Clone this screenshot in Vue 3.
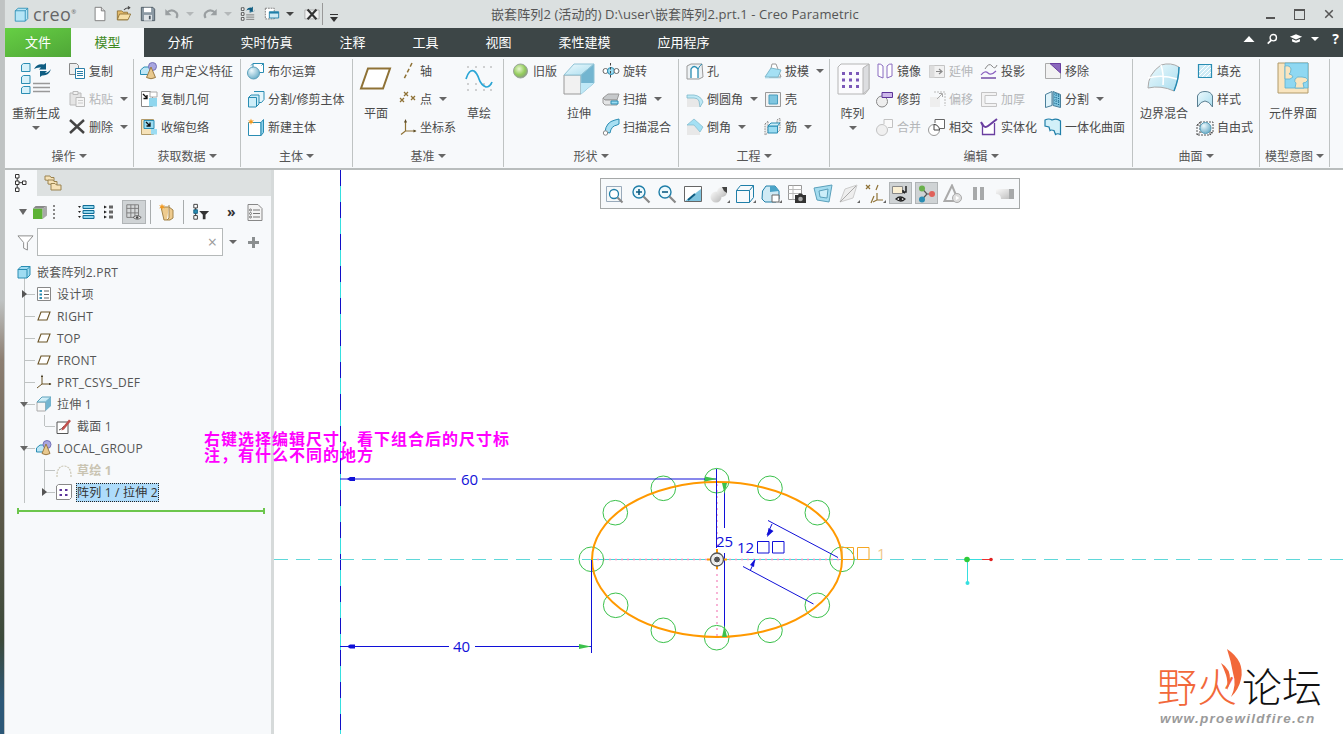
<template>
  <div class="app">
    <!-- icon sprite -->
    <svg class="sprite" xmlns="http://www.w3.org/2000/svg">
      <defs>
        <linearGradient id="g-blue" x1="0" y1="0" x2="1" y2="1"><stop offset="0" stop-color="#eefafd"/><stop offset="1" stop-color="#a9ddef"/></linearGradient>
        <linearGradient id="g-grey" x1="0" y1="0" x2="1" y2="1"><stop offset="0" stop-color="#fafafa"/><stop offset="1" stop-color="#b8b8b8"/></linearGradient>
        <radialGradient id="g-led" cx=".4" cy=".35" r=".7"><stop offset="0" stop-color="#e8f6d0"/><stop offset=".6" stop-color="#93cc5c"/><stop offset="1" stop-color="#8a9a86"/></radialGradient>
        <radialGradient id="g-ball" cx=".35" cy=".3" r=".8"><stop offset="0" stop-color="#eef9fd"/><stop offset="1" stop-color="#62a8c4"/></radialGradient>
      </defs>

      <!-- quick access -->
      <symbol id="logo" viewBox="0 0 18 18"><path d="M1.500 4.500 5 1.500h11.500V14l-3 3h-12z" fill="#b5e5f6" stroke="#2a8db3"/><path d="M1.500 4.500h12V17M13.500 4.500l3-3" fill="none" stroke="#2a8db3"/></symbol>
      <symbol id="q-new" viewBox="0 0 18 18"><path d="M3.500 1.500h7l4 4v11h-11z" fill="#fff" stroke="#777"/><path d="M10.500 1.500v4h4" fill="#ddd" stroke="#777"/></symbol>
      <symbol id="q-open" viewBox="0 0 18 18"><path d="M1.500 15.500v-10h5l1.500 1.500h5v8.500z" fill="#e4bb6a" stroke="#8f7236"/><path d="M1.500 15.500 4 9h12.500l-3 6.500z" fill="#f6dfa6" stroke="#8f7236"/><path d="M9 4.500q2-3 6-2.500M13.500.5l2 1.500-2 1.500" fill="none" stroke="#444" stroke-width="1.200"/></symbol>
      <symbol id="q-save" viewBox="0 0 18 18"><path d="M1.500 1.500h13l2 2v13h-15z" fill="#8b99a3" stroke="#4b5660"/><path d="M4.500 2h8v5h-8z" fill="#fff"/><path d="M4.500 10h9v6.500h-9z" fill="#dfe4e7"/><path d="M10 11h2v4h-2z" fill="#4b5660"/></symbol>
      <symbol id="q-undo" viewBox="0 0 18 18"><path d="M3 7.500q6-5 11 0 2 3 0 6" fill="none" stroke="#9a9fa1" stroke-width="2.400"/><path d="M1.500 3.500v7h7z" fill="#9a9fa1"/></symbol>
      <symbol id="q-redo" viewBox="0 0 18 18"><path d="M15 7.500q-6-5-11 0-2 3 0 6" fill="none" stroke="#9a9fa1" stroke-width="2.400"/><path d="M16.500 3.500v7h-7z" fill="#9a9fa1"/></symbol>
      <symbol id="q-regen" viewBox="0 0 18 18"><path d="M1.500 2h3v3h-3zM1.500 7.500h3v3h-3zM1.500 13h3v3h-3z" fill="#fff" stroke="#222" stroke-width=".8"/><path d="M7 10h9M7 12.500h9M7 15h9" stroke="#777"/><path d="M7 5q2-4 6-3l1.500-1.500V6H10l1.500-1.500Q9 4 7 5z" fill="#0f5d82"/><path d="M17 3q-1 4-5 4l-1 1V6h5z" fill="#0f5d82"/></symbol>
      <symbol id="q-win" viewBox="0 0 18 18"><path d="M1.500 2.500h10v12h-10z" fill="#fff" stroke="#777" stroke-dasharray="2 1"/><path d="M6 6.500h10.500v7H6z" fill="#cfeaf5" stroke="#1f7ea8"/><path d="M6 6.500h10.500v2H6z" fill="#1f7ea8"/></symbol>
      <symbol id="q-close" viewBox="0 0 18 18"><path d="M1 4.500h16v10H1z" fill="#f1f1f1" stroke="#aaa"/><path d="m4 4 10 11M14 4 4 15" stroke="#333" stroke-width="2.400"/></symbol>

      <!-- ribbon, small -->
      <symbol id="copy" viewBox="0 0 18 18"><path d="M1.500 1.500h7l2 2v9h-9z" fill="#eee" stroke="#888"/><path d="M7.500 6.500h9v10h-9z" fill="#fff" stroke="#2a7fa8"/><path d="M9 9.500h6M9 11.500h6M9 13.500h6" stroke="#2a7fa8"/></symbol>
      <symbol id="paste" viewBox="0 0 18 18"><path d="M2 3h11v12H2z" fill="#e5e5e5" stroke="#bbb"/><path d="M5 1.500h5v3H5z" fill="#f1f1f1" stroke="#bbb"/><path d="M8 7.500h8.500v9H8z" fill="#f5f5f5" stroke="#bbb"/><path d="M10 10.500h5M10 13h5" stroke="#ccc"/></symbol>
      <symbol id="del" viewBox="0 0 18 18"><path d="m2 2 14 13M16 2 2 15" stroke="#444" stroke-width="2.400"/></symbol>
      <symbol id="udf" viewBox="0 0 18 18"><path d="M.5 8 4 5h7v7.500H.5z" fill="#bde6f5" stroke="#2a8db3"/><circle cx="12.500" cy="4.500" r="4" fill="#a8a6e0" stroke="#7472b8"/><path d="M11 5 6.500 15.500q4.500 2.500 9 0z" fill="#e9c98e" stroke="#9a7a45"/></symbol>
      <symbol id="copygeo" viewBox="0 0 18 18"><path d="M1.500 1.500h9l2 2v13h-11z" fill="#fff" stroke="#888"/><path d="M9 8h8v8.500H9z" fill="#8fd6ee"/><path d="M10 2h7v5h-7z" fill="#fff" stroke="#aaa"/><path d="m3 4 4 4M7 5v3.500H3.500" fill="none" stroke="#111" stroke-width="1.300"/></symbol>
      <symbol id="shrink" viewBox="0 0 18 18"><path d="M1.500 1.500h12v15h-12z" fill="#f6e2b8" stroke="#b09a6a"/><path d="M4 2.500h10v8H4z" fill="#9bdcf2" stroke="#2a8db3"/><path d="M11 11h6v5.500h-6z" fill="#9bdcf2"/><path d="m6 4 4 4M10 4.500V8H6.500" fill="none" stroke="#111" stroke-width="1.300"/></symbol>
      <symbol id="bool" viewBox="0 0 18 18"><path d="M6 1.500h10.500v9H6z" fill="#fff" stroke="#2a8db3"/><path d="m6 1.500-2 2M16.500 1.500l-2 2" stroke="#2a8db3"/><circle cx="6.500" cy="11" r="6" fill="url(#g-ball)" stroke="#5ba0bb"/></symbol>
      <symbol id="split" viewBox="0 0 18 18"><path d="M7 1.500h10v8l-2.500 3H8V7" fill="#e6f6fb" stroke="#2a8db3"/><path d="M1.500 7.500 4 5h8v9l-3 3H1.500z" fill="#cdeef9" stroke="#2a8db3"/><path d="M1.500 7.500h8V17" fill="none" stroke="#2a8db3"/></symbol>
      <symbol id="newbody" viewBox="0 0 18 18"><path d="M1.500 4.500h12.500v13H1.500z" fill="#fff" stroke="#2a8db3"/><path d="M14 4.500l2.500-3v13L14 17.500z" fill="#8fd0e8" stroke="#2a8db3"/><path d="M4 .5l.8 2.200L7 2 5.400 3.700 7 5.400 4.800 4.800 4 7l-.8-2.200L1 5.400l1.600-1.700L1 2l2.200.7z" fill="#f39a1f"/></symbol>
      <symbol id="axis" viewBox="0 0 18 18"><path d="M13 1 5 17" stroke="#8f7236" stroke-width="1.500" stroke-dasharray="4 2.500"/></symbol>
      <symbol id="point" viewBox="0 0 18 18"><g stroke="#8f7236" stroke-width="1.300"><path d="m5 2 4 4M9 2 5 6M1 8l4 4M5 8l-4 4"/><path d="m12 6 4 4M16 6l-4 4"/></g></symbol>
      <symbol id="csys" viewBox="0 0 18 18"><path d="M6.500 3v10L2 16.500M6.500 13h10" fill="none" stroke="#8f7236" stroke-width="1.200"/><path d="M5 4.500 6.500 1 8 4.500zM14.500 11.500l3 1.500-3 1.500z" fill="#5a4a25"/></symbol>
      <symbol id="legacy" viewBox="0 0 18 18"><circle cx="8.500" cy="9" r="7" fill="url(#g-led)" stroke="#9aa59a"/></symbol>
      <symbol id="revolve" viewBox="0 0 18 18"><circle cx="3.500" cy="9" r="2.500" fill="#fff" stroke="#666"/><circle cx="9" cy="9" r="3.500" fill="#9bdcf2" stroke="#2a8db3"/><path d="M8.500 1v16" stroke="#444" stroke-dasharray="2.500 1.500"/><circle cx="14.500" cy="9" r="2.500" fill="#fff" stroke="#666"/></symbol>
      <symbol id="sweep" viewBox="0 0 18 18"><path d="M1 8 6 4h11l-2 6H3z" fill="#c6c9cb" stroke="#999"/><path d="M1 8v5l2 2h12v-5H3z" fill="#e4e5e6" stroke="#999"/><path d="M9 11h7v3H9z" fill="#9bdcf2" stroke="#2a8db3"/></symbol>
      <symbol id="sweepblend" viewBox="0 0 18 18"><path d="M3 14Q4 4 13 2l4-1v5l-2 1q-6 1-7 8z" fill="#a8dff2" stroke="#2a8db3"/><circle cx="3.500" cy="15" r="2.200" fill="#fff" stroke="#888"/></symbol>
      <symbol id="hole" viewBox="0 0 18 18"><path d="M1 4 5 2h11l1 13-4 2H1z" fill="#eef2f4" stroke="#999"/><path d="M5 16V7q3-5 7 0v9" fill="#fff" stroke="#2a8db3" stroke-width="1.300"/><path d="M12 7q2-4 4-5" fill="none" stroke="#2a8db3"/></symbol>
      <symbol id="round" viewBox="0 0 18 18"><path d="M1 7h8l6 0v10H1z" fill="#e8e8e8"/><path d="M1 5h7q7 1 9 7l-3 5-1-6Q12 8 8 8H1z" fill="#bfe9f6" stroke="#7fb9cc" stroke-width=".8"/></symbol>
      <symbol id="chamfer" viewBox="0 0 18 18"><path d="M1 7h7l6 7v3H1z" fill="#e8e8e8"/><path d="m1 7 7-6 9 8-3 5-6-7z" fill="#a4e0f4" stroke="#7fb9cc" stroke-width=".7"/></symbol>
      <symbol id="draft" viewBox="0 0 18 18"><path d="M1 15h16v2H1z" fill="#d9eef6"/><path d="m5 15 3-13h4l5 13z" fill="#fff" stroke="#999"/><path d="M1 15 7 6l10 2-3 7z" fill="#a4e0f4" stroke="#7fb9cc"/></symbol>
      <symbol id="shell" viewBox="0 0 18 18"><path d="M1.500 2.500h15v14h-15z" fill="#f2f2f2" stroke="#999"/><path d="M5 5h8.500v9H5z" fill="#7fc6e0" stroke="#4a9dbd"/></symbol>
      <symbol id="rib" viewBox="0 0 18 18"><path d="M1 6 4 3v12l-3 2zM13 2l3-2v12l-3 3z" fill="#eee" stroke="#888" stroke-dasharray="1.500 1"/><path d="M4 8h9.500v7H4z" fill="#9bdcf2" stroke="#2a8db3"/><path d="m4 8 3-3h9l-2.500 3z" fill="#cdeef9" stroke="#2a8db3"/></symbol>
      <symbol id="mirror" viewBox="0 0 18 18"><path d="M7 16V4Q5 1.500 2 2v12zM11 16V4q2-2.500 5-2v12z" fill="#fff" stroke="#8a6cc0"/></symbol>
      <symbol id="trim" viewBox="0 0 18 18"><circle cx="6" cy="11.500" r="5.500" fill="#eee" stroke="#888"/><path d="M6 6.500h10.500v-5H6z" transform="translate(0 1)" fill="#cdb8ea" stroke="#5d349a"/></symbol>
      <symbol id="merge" viewBox="0 0 18 18"><circle cx="6" cy="12" r="5.500" fill="#f0f0f0" stroke="#c2c2c2"/><path d="M8 6V1.500h8.500v8H12" fill="#fafafa" stroke="#c2c2c2"/></symbol>
      <symbol id="extend" viewBox="0 0 18 18"><path d="M1.500 3.500h15v12h-15z" fill="#f1f1f1" stroke="#c4c4c4"/><path d="M1.500 3.500h5v12h-5z" fill="#ddd"/><path d="M8 9.500h5M11 7l3 2.500-3 2.500" fill="none" stroke="#888" stroke-width="1.200"/></symbol>
      <symbol id="offset" viewBox="0 0 18 18"><path d="M2 17V7h10v10z" fill="#eee"/><path d="M6 2h11v14" fill="none" stroke="#bbb" stroke-dasharray="2 1"/><path d="m9 9 5-5M11 3.500h3.500V7" fill="none" stroke="#aaa"/></symbol>
      <symbol id="intersect" viewBox="0 0 18 18"><circle cx="6" cy="12" r="5.500" fill="#fff" stroke="#999"/><path d="M7 5V1.500h9.500v9H12" fill="#fff" stroke="#666"/><path d="M6 12V6.500a5.500 5.500 0 0 1 5.500 5.500z" fill="#fff" stroke="#444"/></symbol>
      <symbol id="project" viewBox="0 0 18 18"><path d="M1 16h15" stroke="#6a3fa0" stroke-width="1.400"/><path d="M1 13q4-5 7-2t8-2" fill="none" stroke="#8b60c0" stroke-width="1.200"/><path d="M5 7q4-7 7-3t5-1" fill="none" stroke="#888"/></symbol>
      <symbol id="thicken" viewBox="0 0 18 18"><path d="M1.500 2.500h15v3H5v8h11.500v3h-15z" fill="#f3f3f3" stroke="#c4c4c4"/></symbol>
      <symbol id="solidify" viewBox="0 0 18 18"><path d="M2.500 5v11.500h12V5" fill="#fff" stroke="#6a3fa0" stroke-width="1.300"/><path d="M1 4q3 7 7 4t9-7" fill="none" stroke="#6a3fa0" stroke-width="2"/></symbol>
      <symbol id="remove" viewBox="0 0 18 18"><path d="M1.500 1.500h15v15h-15z" fill="#f2f2f2" stroke="#aaa"/><path d="M6 1.500h10.500V11z" fill="#8a67bd" stroke="#6a3fa0"/></symbol>
      <symbol id="splitsurf" viewBox="0 0 18 18"><path d="M1.500 4.500 8 1.500v14l-6.500 2z" fill="#dff3fa" stroke="#4a7f9a"/><path d="m9 1.500 7.500 3v13L9 15.500z" fill="#7fc4df" stroke="#4a7f9a"/><path d="m10 4 6 2M10 7l6 2M10 10l6 2M10 13l6 2M12 3v12M14.500 4v12" stroke="#0f5d82" stroke-width=".7" stroke-dasharray="1 1"/></symbol>
      <symbol id="unify" viewBox="0 0 18 18"><path d="M1 2q4-2 7 0 5-2 8.500 1v13.500q-3-1.500-5 0l-1.500-4q-3-1-4 0L5 9 1 8z" fill="#d2f0f9" stroke="#1f7ea8" stroke-width="1.200"/></symbol>
      <symbol id="fill" viewBox="0 0 18 18"><path d="M2.500 2.500h13v13h-13z" fill="#cdebf6" stroke="#2a8db3" stroke-width="1.200"/><path d="m3 10 7-7M3 14 14 3M6 15l9-9M10 15l5-5" stroke="#fff"/></symbol>
      <symbol id="style" viewBox="0 0 18 18"><path d="M1.500 17V6Q3 1.500 9 1.500T16.500 6v11q-3.500-6-7.500-6T1.500 17z" fill="url(#g-blue)" stroke="#5a7f92"/></symbol>
      <symbol id="freestyle" viewBox="0 0 18 18"><path d="M4 4h13v10.500H4zM1 7l3-3M1 17l3-2.500M14 17l3-2.500M1 7h13v10H1z" fill="none" stroke="#555" stroke-dasharray="2 1"/><circle cx="9.500" cy="10" r="5.500" fill="url(#g-ball)" stroke="#5ba0bb"/></symbol>

      <!-- ribbon, large -->
      <symbol id="l-regen" viewBox="0 0 34 34"><g fill="#d6f1fa" stroke="#2a8db3"><path d="M2.500 3 4.500 1.500H11v8H2.500zM2.500 15 4.500 13.500H11v8H2.500zM2.500 26 4.500 24.500H11v7H2.500z"/></g><path d="M14 21.500h17M14 25.500h17M14 29.500h17" stroke="#999" stroke-width="1.300"/><path d="M15 7q3-6 10-4.500l2-1.500V7.500h-7l2-2Q18 5 15 7z" fill="#0f5d82"/><path d="M32 7q-2 7-9 6.500L21 15V9h7l-2 2q3 0 6-4z" fill="#0f5d82"/></symbol>
      <symbol id="l-plane" viewBox="0 0 34 34"><path d="M9 6.500h22l-7 20H2z" fill="#fff" stroke="#8f7236" stroke-width="2"/></symbol>
      <symbol id="l-sketch" viewBox="0 0 34 34"><g fill="#888"><circle cx="6" cy="5" r=".7"/><circle cx="14" cy="5" r=".7"/><circle cx="22" cy="5" r=".7"/><circle cx="29" cy="5" r=".7"/><circle cx="6" cy="22" r=".7"/><circle cx="14" cy="22" r=".7"/><circle cx="22" cy="22" r=".7"/><circle cx="29" cy="22" r=".7"/><circle cx="6" cy="28" r=".7"/><circle cx="14" cy="28" r=".7"/><circle cx="22" cy="28" r=".7"/><circle cx="29" cy="28" r=".7"/></g><path d="M4 17Q7 7 12 9q3 2 5 8t7 8q4 0 6-5" fill="none" stroke="#2aa6d6" stroke-width="1.700"/></symbol>
      <symbol id="l-extrude" viewBox="0 0 34 34"><path d="M2 13h17v19H2z" fill="#f1f1f1" stroke="#999"/><path d="M2 13 12 2h20L19 13z" fill="url(#g-blue)" stroke="#8fc3d6"/><path d="M19 13 32 2v19L19 32z" fill="#73b5d0" stroke="#8fc3d6"/><path d="M19 32 32 21H19z" fill="#bfe8f6"/></symbol>
      <symbol id="l-pattern" viewBox="0 0 34 34"><path d="M2 5 5 2h28v25l-4 5H2z" fill="#fbfbfd" stroke="#b5b5b5"/><path d="M27 6 33 2v25l-6 5z" fill="#dcdde0" stroke="#b5b5b5"/><g fill="#7b58b8"><path d="M6 10h3v3H6zM13 10h3v3h-3zM20 10h3v3h-3zM6 16.500h3v3H6zM13 16.500h3v3h-3zM20 16.500h3v3h-3zM6 23h3v3H6zM13 23h3v3h-3zM20 23h3v3h-3z"/></g></symbol>
      <symbol id="l-blend" viewBox="0 0 34 34"><path d="M1 26Q1 12 14 3q10-3 18 2 0 12-5 24-13-6-26-3z" fill="url(#g-blue)" stroke="#aaa"/><path d="M14 3q3 9 2 20M1 16q14-4 29 1" fill="none" stroke="#fff" stroke-width="1.600"/><path d="M32 5q0 12-5 24" fill="none" stroke="#1f8ab5" stroke-width="1.400"/></symbol>
      <symbol id="l-interface" viewBox="0 0 34 34"><path d="M2 1h30v30H2z" fill="#f9e5bf" stroke="#b09a6a"/><path d="M9 1h23v25H9z" fill="#8fd8f2" stroke="#5ab0d0" stroke-width=".8"/><path d="M9 4q5-1 6 3 0 4-2 5 3 0 4 3l-3 2H9zM19 17q2-3 7-2 5 0 6 3-2 3-5 3l1 5h-9l1-5q-2-1-1-4z" fill="#f9e5bf" stroke="#5ab0d0" stroke-width=".8"/></symbol>

      <!-- canvas toolbar -->
      <symbol id="t-refit" viewBox="0 0 20 20"><path d="M1.500 2.500h15v15h-15z" fill="#f5f8f9" stroke="#9ab"/><circle cx="9" cy="10" r="4.500" fill="#fff" stroke="#1f7ea8" stroke-width="1.300"/><path d="m12.500 13.500 5 5" stroke="#888" stroke-width="2"/></symbol>
      <symbol id="t-in" viewBox="0 0 20 20"><circle cx="8" cy="8" r="6" fill="#eef9fd" stroke="#1f7ea8" stroke-width="1.400"/><path d="M5 8h6M8 5v6" stroke="#0f5d82" stroke-width="1.600"/><path d="m12.500 12.500 6 6" stroke="#888" stroke-width="2.200"/></symbol>
      <symbol id="t-out" viewBox="0 0 20 20"><circle cx="8" cy="8" r="6" fill="#eef9fd" stroke="#1f7ea8" stroke-width="1.400"/><path d="M5 8h6" stroke="#0f5d82" stroke-width="1.600"/><path d="m12.500 12.500 6 6" stroke="#888" stroke-width="2.200"/></symbol>
      <symbol id="t-repaint" viewBox="0 0 20 20"><path d="M1.500 2.500h17v15h-17z" fill="#fff" stroke="#666"/><path d="M2 17 18 5v12z" fill="#7fc4df"/><path d="m5 16 7-6" stroke="#0f5d82" stroke-width="2"/></symbol>
      <symbol id="t-shade" viewBox="0 0 20 20"><circle cx="7" cy="13" r="5.500" fill="url(#g-grey)"/><circle cx="13" cy="8" r="5" fill="url(#g-grey)"/><path d="M13 3h5v6l-3-2z" fill="#444"/></symbol>
      <symbol id="t-box" viewBox="0 0 20 20"><path d="M1.500 6.500h13v12h-13zM1.500 6.500l4-5h13v12l-4 5M14.500 6.500l4-5" fill="none" stroke="#1f7ea8"/></symbol>
      <symbol id="t-saved" viewBox="0 0 20 20"><path d="M1.500 7 5 2h9l4 5v8l-3 3H4l-3-3z" fill="#cfeaf5" stroke="#1f7ea8"/><path d="M9 2h5l4 5-9 1z" fill="#4aa3c7"/><path d="M11 11h7v7h-7z" fill="#fff" stroke="#666"/></symbol>
      <symbol id="t-table" viewBox="0 0 20 20"><path d="M1.500 1.500h13v14h-13z" fill="#fff" stroke="#999"/><path d="M1.500 5.500h13M1.500 9.500h13M6 1.500v14" stroke="#bbb"/><path d="M8 11h3l1-1.500h3l1 1.500h3v8H8z" fill="#333"/><circle cx="13.500" cy="15" r="2.300" fill="#aaa"/></symbol>
      <symbol id="t-persp" viewBox="0 0 20 20"><path d="m1 4 18-3-3 17L4 16z" fill="#a4dcef" stroke="#5ba0bb"/><path d="m6 7 9-2-1 9-7-1z" fill="#cdeef9" stroke="#5ba0bb"/></symbol>
      <symbol id="t-plane" viewBox="0 0 20 20"><path d="M1 18 6 5 18 1l-4 13z" fill="#eee" stroke="#ccc"/><path d="M1 18 17 2" stroke="#aaa"/></symbol>
      <symbol id="t-datum" viewBox="0 0 20 20"><g stroke="#8f7236" stroke-width="1.200" fill="none"><path d="m1 1 4 4M5 1 1 5M13 1l-2 5M9 12l-3 7M12 9v7l-4 2M12 16h6"/></g></symbol>
      <symbol id="t-annot" viewBox="0 0 20 20"><path d="M1.500 2.500h10v7h-10z" fill="#fbf0d4" stroke="#888"/><path d="M15 2v6l-3 0M12 6l0 2 2 1" fill="none" stroke="#222" stroke-width="1.500"/><path d="M5 15q4-4 9 0-4 4-9 0z" fill="#fff" stroke="#222" stroke-width="1.200"/><circle cx="9.500" cy="15" r="1.600" fill="#222"/></symbol>
      <symbol id="t-node" viewBox="0 0 20 20"><path d="M5 4.500 10 10l-5 5.500M10 10h5" stroke="#555" stroke-width="1.200" fill="none"/><circle cx="5" cy="4.500" r="3" fill="#6ab04c"/><circle cx="15" cy="10" r="3" fill="#e0615a"/><circle cx="5" cy="15.500" r="3" fill="#2a8db3"/></symbol>
      <symbol id="t-play" viewBox="0 0 20 20"><path d="M9 1.500 1.500 17h14z" fill="none" stroke="#aaa" stroke-width="2"/><circle cx="14" cy="14" r="4.500" fill="#ddd" stroke="#aaa"/><path d="m12.800 11.800 3.500 2.200-3.500 2.200z" fill="#fff"/></symbol>
      <symbol id="t-pause" viewBox="0 0 20 20"><path d="M4 3h4v13H4zM11 3h4v13h-4z" fill="#a7a9aa"/></symbol>
      <symbol id="t-flat" viewBox="0 0 20 20"><path d="M1 5h18v10H6q0-5-5-5z" fill="url(#g-grey)"/><path d="M14 5h5v10h-5z" fill="#a7a9aa"/></symbol>

      <!-- model tree -->
      <symbol id="m-tree" viewBox="0 0 14 20"><g fill="#fff" stroke="#333"><path d="M1.500 1.500h3.500v3.500H1.500zM1.500 8h3.500v3.500H1.500zM1.500 15h3.500v3.500H1.500zM8.500 8H12v3.500H8.500z"/></g><path d="M3.200 5v3M3.200 11.500V15M5 9.700h3.500" stroke="#333"/></symbol>
      <symbol id="m-folders" viewBox="0 0 18 18"><path d="M1 6V2h5l1 1.500h3V7z" fill="#f6e2b8" stroke="#9a8350"/><path d="M4 10V6h5l1 1.500h3V11z" fill="#f6e2b8" stroke="#9a8350"/><path d="M7 16V9.500h4l1.500 1.500H17v5z" fill="#f6e2b8" stroke="#9a8350"/></symbol>
      <symbol id="m-cube" viewBox="0 0 16 16"><path d="M0 4h11v12H0z" fill="#5db335"/><path d="M0 4l3-3h13l-5 3z" fill="#888"/><path d="M11 4l5-3v11l-5 4z" fill="#a8a8a8"/></symbol>
      <symbol id="m-list" viewBox="0 0 18 18"><path d="M6 2.500h11v3H6zM6 7.500h11v3H6zM6 12.500h11v3H6z" fill="#8fd6ee" stroke="#116d96"/><path d="M1 3h3l-1.500 2zM1 8h3l-1.500 2zM1 13h3l-1.500 2z" fill="#222"/></symbol>
      <symbol id="m-list2" viewBox="0 0 18 18"><path d="M9 2.500h4v3H9zM9 7.500h4v3H9zM9 12.500h4v3H9z" fill="#666"/><path d="M4 2.500l3 1.500-3 1.500zM4 7.500l3 1.500-3 1.500zM4 12.500l3 1.500-3 1.500z" fill="#222"/></symbol>
      <symbol id="m-cols" viewBox="0 0 20 20"><path d="M2 2h13v14H2z" fill="#d5d8d9" stroke="#777"/><path d="M2 6h13M6.500 2v14M11 2v14M2 11h13" stroke="#777"/><path d="M9 16q4-4 9 0-4 4-9 0z" fill="#eee" stroke="#555"/><circle cx="13.500" cy="16" r="1.400" fill="#444"/></symbol>
      <symbol id="m-tag" viewBox="0 0 18 18"><path d="M3 4h8l4 3v8l-3 2H6z" fill="#eecb8e" stroke="#a2834a"/><path d="M11 2v13l-2 2" fill="#fff" stroke="#a2834a"/><path d="M4 .5l.8 2.200L7 2 5.400 3.700 7 5.400 4.800 4.800 4 7l-.8-2.200L1 5.400l1.600-1.700L1 2l2.200.7z" fill="#f39a1f"/></symbol>
      <symbol id="m-filter" viewBox="0 0 20 20"><g fill="#fff" stroke="#333"><path d="M2 1.500h4v4H2zM2 14h4v4H2z"/></g><path d="M2 7.500h4v4H2z" fill="#2a8db3" stroke="#0f5d82"/><path d="M4 5.500v2M4 11.500V14" stroke="#333"/><path d="M8 9h11l-4 4v5h-3v-5z" fill="#333"/></symbol>
      <symbol id="m-notes" viewBox="0 0 18 18"><path d="M2 1.500h10l4 4v12H2z" fill="#f4f4f4" stroke="#888"/><path d="M7 7h7M7 10.500h7M7 14h7" stroke="#777"/><circle cx="4.500" cy="7" r="1" fill="none" stroke="#777"/><circle cx="4.500" cy="10.500" r="1" fill="none" stroke="#777"/><circle cx="4.500" cy="14" r="1" fill="none" stroke="#777"/></symbol>
      <symbol id="m-funnel" viewBox="0 0 18 18"><path d="M1 2h16l-6 7v8l-4-2V9z" fill="#fff" stroke="#888"/></symbol>
      <symbol id="n-part" viewBox="0 0 14 14"><path d="M1 4.500 4 1.500h9V10l-3 3H1z" fill="#9fdcf2" stroke="#2a8db3"/><path d="M1 4.500h9V13M10 4.500l3-3" fill="none" stroke="#2a8db3"/></symbol>
      <symbol id="n-design" viewBox="0 0 14 14"><path d="M.5.500h13v13H.5z" fill="#fff" stroke="#888"/><path d="M2.500 3h2.500v2H2.500zM2.500 6.500h2.500v2H2.500zM2.500 10h2.500v2H2.500z" fill="#2a8db3"/><path d="M7 4h5M7 7.500h5M7 11h5" stroke="#666"/></symbol>
      <symbol id="n-plane" viewBox="0 0 14 14"><path d="M4 3h9l-3 8H1z" fill="#fff" stroke="#6b5426" stroke-width="1.100"/></symbol>
      <symbol id="n-csys" viewBox="0 0 16 16"><path d="M6 2v8L1 14M6 10h9" fill="none" stroke="#6b5426"/><path d="M5 3l1-2.500L7 3zM13 9l2.500 1L13 11z" fill="#332810"/></symbol>
      <symbol id="n-extrude" viewBox="0 0 16 16"><path d="M1 6h8.500v9H1z" fill="#f6f6f6" stroke="#aaa"/><path d="M1 6 6 1h9L9.500 6z" fill="url(#g-blue)" stroke="#5ba0bb"/><path d="M9.500 6 15 1v9l-5.500 5z" fill="#73b5d0"/></symbol>
      <symbol id="n-section" viewBox="0 0 16 16"><path d="M1 4h11v11.500H1z" fill="#fff" stroke="#555"/><path d="M3 12q3-1 4-3t2 0" fill="none" stroke="#555"/><path d="m6 10 7-8.500 2 1.500-7 8.500-2.500 1z" fill="#c0504d"/></symbol>
      <symbol id="n-group" viewBox="0 0 16 16"><path d="M.5 8 4 5h6v7H.5z" fill="#bde6f5" stroke="#2a8db3"/><circle cx="11" cy="4.500" r="4" fill="#a8a6e0" stroke="#7472b8"/><path d="M10 4 6 13.500q4 2.500 8 0z" fill="#e9c98e" stroke="#9a7a45"/></symbol>
      <symbol id="n-sketch" viewBox="0 0 16 16"><path d="M1 15V12q1-8 7-8t7 8v3" fill="none" stroke="#cbc7b5" stroke-width="1.200" stroke-dasharray="2 1"/></symbol>
      <symbol id="n-pattern" viewBox="0 0 16 16"><path d="M.5 2 2.500.5h13v13l-2 2H.5z" fill="#fff" stroke="#888"/><path d="M3.500 5h2.500v2H3.500zM9 5h2.500v2H9zM3.500 10h2.500v2H3.500zM9 10h2.500v2H9z" fill="#5d349a"/></symbol>
    </svg>

    <header class="titlebar">
      <svg class="qat-logo"><use href="#logo" /></svg>
      <span class="brand">creo<sup>®</sup></span>
      <div class="qat">
        <span v-for="q in quickIcons" :key="q.id" class="qat-slot" :class="q.cls">
          <svg class="qat-icon"><use :href="'#' + q.id" /></svg>
          <i v-if="q.cls" class="qat-caret"></i>
        </span>
        <i class="qat-sep"></i>
        <i class="qat-drop"></i>
      </div>
      <div class="title">嵌套阵列2 (活动的) D:\user\嵌套阵列2.prt.1 - Creo Parametric</div>
      <div class="winctl">
        <i class="win-min"></i>
        <i class="win-max"></i>
        <svg class="win-close" viewBox="0 0 12 12"><path d="m1.500 1.500 9 9M10.500 1.500l-9 9" stroke="#555" stroke-width="1.800" /></svg>
      </div>
    </header>

    <nav class="tabs">
      <span class="tab-file">文件</span>
      <span class="tab-active">模型</span>
      <span v-for="t in tabs" :key="t" class="tab">{{ t }}</span>
      <div class="tab-tools">
        <svg viewBox="0 0 12 8" class="tt-up"><path d="M.5 7 6 1 11.500 7z" fill="#fff" /></svg>
        <svg viewBox="0 0 14 14" class="tt-search"><circle cx="8.500" cy="5.500" r="3.700" fill="none" stroke="#fff" stroke-width="1.600" /><path d="M6 8.500 2 12.500" stroke="#fff" stroke-width="2" /></svg>
        <svg viewBox="0 0 16 12" class="tt-hat"><path d="M8 1 1 4l7 3 7-3z" fill="#fff" /><path d="M3.500 6.500v3q4.500 2.500 9 0v-3L8 8.500z" fill="#fff" /></svg>
        <i class="tt-caret"></i>
        <span class="tt-help">?</span>
      </div>
    </nav>

    <section class="ribbon">
      <div v-for="g in groups" :key="g.label" class="group" :style="{ width: g.w + 'px' }">
        <div class="group-body" :style="{ paddingLeft: (g.pl || 0) + 'px' }">
          <template v-for="(c, i) in g.cols" :key="i">
            <div v-if="c.large" class="col-large" :style="{ width: c.w + 'px' }">
              <svg class="icon-large"><use :href="'#' + c.icon" /></svg>
              <span class="large-label">{{ c.large }}</span>
              <i v-if="c.arrow" class="caret"></i>
            </div>
            <div v-else class="col-list" :style="{ width: c.w + 'px', paddingLeft: (c.pl || 0) + 'px' }">
              <div v-for="it in c.items" :key="it.label" class="item" :class="{ off: it.off }">
                <svg class="icon-small"><use :href="'#' + it.icon" /></svg>
                <span class="item-label">{{ it.label }}</span>
                <i v-if="it.arrow" class="caret"></i>
              </div>
            </div>
          </template>
        </div>
        <div class="group-foot">{{ g.label }}<i class="caret"></i></div>
      </div>
    </section>

    <main class="main">
      <aside class="panel">
        <div class="panel-tabs">
          <div class="ptab active"><svg class="ptab-tree"><use href="#m-tree" /></svg></div>
          <div class="ptab"><svg class="ptab-folders"><use href="#m-folders" /></svg></div>
        </div>
        <div class="tree-tools">
          <i class="tools-caret"></i>
          <svg class="ti ti-cube"><use href="#m-cube" /></svg>
          <i class="tools-dots"></i>
          <svg class="ti ti-list"><use href="#m-list" /></svg>
          <svg class="ti ti-list2"><use href="#m-list2" /></svg>
          <span class="ti-active"><svg class="ti"><use href="#m-cols" /></svg></span>
          <i class="tools-sep"></i>
          <svg class="ti ti-tag"><use href="#m-tag" /></svg>
          <i class="tools-sep"></i>
          <svg class="ti ti-filter"><use href="#m-filter" /></svg>
          <span class="tools-more">»</span>
          <svg class="ti ti-notes"><use href="#m-notes" /></svg>
        </div>
        <div class="search-row">
          <svg class="funnel"><use href="#m-funnel" /></svg>
          <div class="search-box"><span class="search-x">×</span></div>
          <i class="tools-caret search-caret"></i>
          <span class="search-plus"></span>
        </div>
        <div class="tree">
          <i class="tree-line"></i>
          <div v-for="n in treeRows" :key="n.label" class="tree-row" :class="['lvl' + n.level, { muted: n.muted, last: n.last, wide: n.wide }]">
            <i v-if="n.arrow" class="twist" :class="n.arrow"></i>
            <svg class="tree-icon"><use :href="'#' + n.icon" /></svg>
            <span class="tree-label" :class="{ selected: n.selected }">{{ n.label }}</span>
          </div>
          <div class="insert-line"></div>
        </div>
      </aside>

      <div class="canvas">
        <svg class="drawing" viewBox="274 170 1069 564" xmlns="http://www.w3.org/2000/svg">
          <!-- datum lines -->
          <path d="M340.500 170V734" stroke="#35dfe0" />
          <path d="M340.500 170V734" stroke="#1010c8" stroke-dasharray="16 16" />
          <path d="M274 559.500H1343" stroke="#5fd8da" stroke-dasharray="14 8" />
          <path d="M591 559.500H842" stroke="#48d4d4" />
          <path d="M591 559.500H842M717 484V636" stroke="#f48cc0" stroke-width="1.300" stroke-dasharray="2 4" />

          <!-- pattern members -->
          <circle v-for="c in memberCircles" :key="c[0] + '-' + c[1]" :cx="c[0]" :cy="c[1]" r="12.300" fill="none" stroke="#3cc14c" />
          <ellipse cx="717" cy="559.500" rx="125" ry="77.500" fill="none" stroke="#f90" stroke-width="2" />

          <!-- dimensions -->
          <g stroke="#1010d8" fill="none">
            <path d="M340 479H456M482 479H717M716.500 469V548" />
            <path d="M724.500 483V528M724.500 553V627" />
            <path d="M591.500 560V653M340 646.500H449M475 646.500H591" />
            <path d="M768 520.500 838 557.500M743 566.500 813.500 604" />
            <path d="M772 524 767 535M755 560 750.500 570" />
          </g>
          <g fill="#1010d8">
            <path d="M347 479l3-2h5v4h-5zM347 646.500l3-2h5v4h-5zM767 537l1.500-9 5 3zM755 559l-1 8-4-2z" />
          </g>
          <g fill="#3cc14c">
            <path d="M717 479l-12-2.500v5zM724.500 494l-2.500-11h5zM724.500 625l-2.500 12h5zM591 646.500l-12-2.500v5z" />
          </g>
          <g class="dim-text" fill="#1010d8">
            <text x="461" y="484.500">60</text>
            <text x="453" y="652">40</text>
            <text x="716" y="546.500">25</text>
            <text x="737" y="553">12</text>
          </g>
          <path d="M757.500 541.500h11.500v11.500h-11.500zM772.500 541.500h11.500v11.500h-11.500z" fill="none" stroke="#1010d8" />
          <path d="M842 547.500h11.500v12H842zM857.500 547.500h11.500v12h-11.500z" fill="none" stroke="#f5a623" stroke-width="1" />
          <text x="877" y="559" class="dim-text" fill="#f0c88a">1</text>

          <!-- centre marker -->
          <path d="M717 549V569M707 559.500H727" stroke="#f90" stroke-width="2" />
          <circle cx="717" cy="559.500" r="6.500" fill="#eee" stroke="#555" stroke-width="1.300" />
          <circle cx="717" cy="559.500" r="3.500" fill="#555" stroke="#fff" />

          <!-- small triad -->
          <path d="M967 559.500H982" stroke="#35dfe0" />
          <path d="M982 559.500H990" stroke="#f03030" />
          <path d="M967.500 559.500V582" stroke="#35dfe0" />
          <circle cx="967" cy="559.500" r="2.800" fill="#2ecb3a" />
          <circle cx="991" cy="559.500" r="1.800" fill="#e02020" />
          <circle cx="967.500" cy="583" r="2" fill="#35dfe0" />
        </svg>

        <div class="view-bar">
          <span v-for="t in viewIcons" :key="t.id" class="view-btn" :class="{ on: t.on }"><svg><use :href="'#' + t.id" /></svg><i v-if="t.corner" class="corner"></i></span>
        </div>
      </div>

      <div class="note">
        <span>右键选择编辑尺寸，看下组合后的尺寸标</span>
        <span>注，有什么不同的地方</span>
      </div>

      <div class="mark">
        <div class="mark-name"><span class="mark-hot">野火</span><span class="mark-cold">论坛</span></div>
        <svg class="mark-flame" viewBox="0 0 30 50"><path d="M10 0q18 12 14 30-2 10-10 18 6-12 2-24Q14 12 10 0zM4 14q10 6 9 18-1 6-3 9 1-9-1-15T4 14z" fill="#f2683a" /></svg>
        <div class="mark-url">www.proewildfire.cn</div>
      </div>
    </main>
  </div>
</template>

<script setup>
const tabs = ['分析', '实时仿真', '注释', '工具', '视图', '柔性建模', '应用程序']

const quickIcons = [
  { id: 'q-new' },
  { id: 'q-open' },
  { id: 'q-save' },
  { id: 'q-undo', cls: 'soft' },
  { id: 'q-redo', cls: 'soft' },
  { id: 'q-regen' },
  { id: 'q-win', cls: 'dark' },
  { id: 'q-close' }
]

const groups = [
  {
    label: '操作', w: 129,
    cols: [
      { large: '重新生成', icon: 'l-regen', w: 62, arrow: true },
      { w: 66, pl: 1, items: [
        { icon: 'copy', label: '复制' },
        { icon: 'paste', label: '粘贴', arrow: true, off: true },
        { icon: 'del', label: '删除', arrow: true }
      ] }
    ]
  },
  {
    label: '获取数据', w: 107, pl: 6,
    cols: [{ w: 99, items: [
      { icon: 'udf', label: '用户定义特征' },
      { icon: 'copygeo', label: '复制几何' },
      { icon: 'shrink', label: '收缩包络' }
    ] }]
  },
  {
    label: '主体', w: 112, pl: 6,
    cols: [{ w: 105, items: [
      { icon: 'bool', label: '布尔运算' },
      { icon: 'split', label: '分割/修剪主体' },
      { icon: 'newbody', label: '新建主体' }
    ] }]
  },
  {
    label: '基准', w: 151,
    cols: [
      { large: '平面', icon: 'l-plane', w: 46 },
      { w: 62, items: [
        { icon: 'axis', label: '轴' },
        { icon: 'point', label: '点', arrow: true },
        { icon: 'csys', label: '坐标系' }
      ] },
      { large: '草绘', icon: 'l-sketch', w: 36 }
    ]
  },
  {
    label: '形状', w: 175, pl: 8,
    cols: [
      { w: 50, items: [{ icon: 'legacy', label: '旧版' }] },
      { large: '拉伸', icon: 'l-extrude', w: 34 },
      { w: 72, pl: 6, items: [
        { icon: 'revolve', label: '旋转' },
        { icon: 'sweep', label: '扫描', arrow: true },
        { icon: 'sweepblend', label: '扫描混合' }
      ] }
    ]
  },
  {
    label: '工程', w: 151, pl: 7,
    cols: [
      { w: 78, items: [
        { icon: 'hole', label: '孔' },
        { icon: 'round', label: '倒圆角', arrow: true },
        { icon: 'chamfer', label: '倒角', arrow: true }
      ] },
      { w: 64, items: [
        { icon: 'draft', label: '拔模', arrow: true },
        { icon: 'shell', label: '壳' },
        { icon: 'rib', label: '筋', arrow: true }
      ] }
    ]
  },
  {
    label: '编辑', w: 303,
    cols: [
      { large: '阵列', icon: 'l-pattern', w: 45, arrow: true },
      { w: 53, pl: 1, items: [
        { icon: 'mirror', label: '镜像' },
        { icon: 'trim', label: '修剪' },
        { icon: 'merge', label: '合并', off: true }
      ] },
      { w: 52, items: [
        { icon: 'extend', label: '延伸', off: true },
        { icon: 'offset', label: '偏移', off: true },
        { icon: 'intersect', label: '相交' }
      ] },
      { w: 64, items: [
        { icon: 'project', label: '投影' },
        { icon: 'thicken', label: '加厚', off: true },
        { icon: 'solidify', label: '实体化' }
      ] },
      { w: 86, items: [
        { icon: 'remove', label: '移除' },
        { icon: 'splitsurf', label: '分割', arrow: true },
        { icon: 'unify', label: '一体化曲面' }
      ] }
    ]
  },
  {
    label: '曲面', w: 127,
    cols: [
      { large: '边界混合', icon: 'l-blend', w: 62 },
      { w: 62, pl: 1, items: [
        { icon: 'fill', label: '填充' },
        { icon: 'style', label: '样式' },
        { icon: 'freestyle', label: '自由式' }
      ] }
    ]
  },
  {
    label: '模型意图', w: 70,
    cols: [{ large: '元件界面', icon: 'l-interface', w: 66 }]
  }
]

const viewIcons = [
  { id: 't-refit' },
  { id: 't-in' },
  { id: 't-out' },
  { id: 't-repaint' },
  { id: 't-shade', corner: true },
  { id: 't-box', corner: true },
  { id: 't-saved', corner: true },
  { id: 't-table' },
  { id: 't-persp' },
  { id: 't-plane', corner: true },
  { id: 't-datum', corner: true },
  { id: 't-annot', on: true },
  { id: 't-node', on: true },
  { id: 't-play' },
  { id: 't-pause' },
  { id: 't-flat' }
]

const treeRows = [
  { label: '嵌套阵列2.PRT', level: 0, icon: 'n-part' },
  { label: '设计项', level: 1, icon: 'n-design', arrow: 'right' },
  { label: 'RIGHT', level: 1, icon: 'n-plane' },
  { label: 'TOP', level: 1, icon: 'n-plane' },
  { label: 'FRONT', level: 1, icon: 'n-plane' },
  { label: 'PRT_CSYS_DEF', level: 1, icon: 'n-csys', wide: true },
  { label: '拉伸 1', level: 1, icon: 'n-extrude', arrow: 'down', wide: true },
  { label: '截面 1', level: 2, icon: 'n-section', last: true, wide: true },
  { label: 'LOCAL_GROUP', level: 1, icon: 'n-group', arrow: 'down', wide: true },
  { label: '草绘 1', level: 2, icon: 'n-sketch', muted: true, wide: true },
  { label: '阵列 1 / 拉伸 2', level: 2, icon: 'n-pattern', arrow: 'right', selected: true, last: true, wide: true }
]

// centres of the twelve pattern members, screen coordinates
const memberCircles = [
  [716.7, 480.7], [663.3, 488.3], [615.3, 512.7], [591.3, 559.3],
  [615.7, 605.3], [663.3, 630.3], [716.7, 637.7], [770, 630.3],
  [817.3, 605.3], [842, 559.3], [817.3, 512.7], [770, 488.3]
]
</script>

<style>
html,
body {
  margin: 0;
  background: #fff;
}
</style>

<style scoped>
.app {
  width: 1343px;
  height: 734px;
  overflow: hidden;
  position: relative;
  padding-left: 5px;
  box-sizing: border-box;
  background: linear-gradient(#bfc3c3 0 300px, #8d7f72 360px, #5f5a4a 500px, #3c4a3a 640px, #2d5878 700px, #2d5878);
  font-family: "Open Sans", "Noto Sans CJK SC", sans-serif;
  font-size: 12px;
  color: #4a4a4a;
}

/* 1px lighter window edge next to the desktop strip */
.app::before {
  content: "";
  position: absolute;
  left: 4px;
  top: 0;
  bottom: 0;
  width: 1px;
  background: #c2c5c5;
}

.sprite {
  position: absolute;
  width: 0;
  height: 0;
}

i {
  display: block;
  font-style: normal;
}

svg {
  display: block;
  flex-shrink: 0;
}

/* title bar */
.titlebar {
  height: 28px;
  padding-left: 9px;
  background: #dbe0e0;
  display: flex;
  align-items: center;
  position: relative;
}

.qat-logo {
  width: 15px;
  height: 15px;
}

.brand {
  margin-left: 4px;
  width: 59px;
  font-size: 18px;
  line-height: 18px;
  color: #666;
  letter-spacing: .3px;
}

.brand sup {
  font-size: 6px;
  vertical-align: 7px;
  line-height: 0;
}

.qat {
  display: flex;
  align-items: center;
}

.qat-slot {
  display: flex;
  align-items: center;
  width: 24px;
}

.qat-slot.soft {
  width: 38px;
}

.qat-slot.dark {
  width: 40px;
}

.qat-slot:last-of-type {
  width: 18px;
}

.qat-icon {
  width: 16px;
  height: 16px;
}

.qat-caret {
  width: 0;
  height: 0;
  margin-left: 6px;
  border: 4px solid transparent;
  border-top: 4px solid #b4b8b9;
  border-bottom: 0;
}

.dark .qat-caret {
  border-top-color: #444;
}

.qat-sep {
  width: 1px;
  height: 22px;
  background: #999;
}

.qat-drop {
  margin-left: 7px;
  width: 8px;
  border-top: 1px solid #333;
  height: 0;
  position: relative;
}

.qat-drop::after {
  content: "";
  position: absolute;
  left: 0;
  top: 2px;
  border: 4px solid transparent;
  border-top: 5px solid #333;
  border-bottom: 0;
}

.title {
  position: absolute;
  left: 486px;
  top: 0;
  line-height: 28px;
  font-size: 13px;
  letter-spacing: .1px;
  color: #555;
  white-space: nowrap;
}

.winctl {
  margin-left: auto;
  display: flex;
  align-items: center;
  gap: 19px;
  padding-right: 9px;
}

.win-min {
  width: 9px;
  height: 2px;
  margin-top: 7px;
  background: #555;
}

.win-max {
  width: 9px;
  height: 8px;
  border: 1px solid #555;
  border-top-width: 2px;
}

.win-close {
  width: 10px;
  height: 10px;
}

/* tabs */
.tabs {
  height: 29px;
  background: #3d4647;
  display: flex;
  align-items: stretch;
  font-size: 13px;
  line-height: 29px;
  color: #fff;
}

.tab-file {
  width: 66px;
  text-align: center;
  background: linear-gradient(160deg, #66cf44, #4fa637);
}

.tab-active {
  width: 73px;
  text-align: center;
  background: #f7f9fb;
  color: #3f8a1f;
}

.tab {
  padding: 0 23.5px;
}

.tab-tools {
  margin-left: auto;
  display: flex;
  align-items: center;
  padding-right: 4px;
  padding-bottom: 8px;
}

.tt-up {
  width: 12px;
  height: 8px;
  margin-right: 11px;
}

.tt-search {
  width: 12px;
  height: 12px;
  margin-right: 11px;
}

.tt-hat {
  width: 14px;
  height: 11px;
  margin-right: 8px;
}

.tt-caret {
  width: 0;
  height: 0;
  margin-right: 13px;
  border: 4px solid transparent;
  border-top: 4px solid #fff;
  border-bottom: 0;
}

.tt-help {
  font-weight: 700;
  font-size: 14px;
  line-height: 12px;
}

/* ribbon */
.ribbon {
  height: 111px;
  background: #f7f9fb;
  border-bottom: 2px solid #b9bdbd;
  display: flex;
}

.group {
  box-sizing: border-box;
  border-right: 1px solid #bfc3c3;
  margin: 2px 0 1px;
  display: flex;
  flex-direction: column;
}

.group-body {
  height: 83px;
  display: flex;
}

.group-foot {
  flex: 1;
  display: flex;
  align-items: center;
  justify-content: center;
  gap: 3px;
  color: #555;
  padding-top: 2px;
}

.col-large {
  display: flex;
  flex-direction: column;
  align-items: center;
  padding-top: 3px;
}

.icon-large {
  width: 34px;
  height: 34px;
}

.large-label {
  margin-top: 10px;
  line-height: 16px;
  white-space: nowrap;
}

.col-large .caret {
  margin-top: 4px;
}

.col-list {
  box-sizing: border-box;
}

.item {
  height: 28px;
  display: flex;
  align-items: center;
  white-space: nowrap;
  margin-top: -2px;
  margin-bottom: 2px;
}

.icon-small {
  width: 18px;
  height: 18px;
  margin-right: 3px;
}

.item .caret {
  margin-left: 7px;
}

.item.off {
  color: #b4b6b8;
}

.caret {
  width: 0;
  height: 0;
  border: 4px solid transparent;
  border-top: 4px solid #666;
  border-bottom: 0;
}

/* main area */
.main {
  height: 564px;
  display: flex;
  position: relative;
}

.panel {
  width: 266px;
  flex-shrink: 0;
  background: #f7f9fb;
  border-right: 3px solid #d6dada;
}

.panel-tabs {
  height: 26px;
  display: flex;
  background: #dde1e1;
}

.ptab {
  width: 32px;
  display: flex;
  align-items: center;
  justify-content: center;
}

.ptab.active {
  background: #f7f9fb;
}

.ptab-tree {
  width: 14px;
  height: 20px;
}

.ptab-folders {
  width: 18px;
  height: 18px;
}

.tree-tools {
  height: 32px;
  padding-left: 14px;
  display: flex;
  align-items: center;
}

.tools-caret {
  width: 0;
  height: 0;
  border: 4.500px solid transparent;
  border-top: 6px solid #666;
  border-bottom: 0;
}

.ti {
  width: 18px;
  height: 18px;
}

.ti-cube {
  width: 14px;
  height: 14px;
  margin-left: 6px;
}

.tools-dots {
  width: 2px;
  height: 14px;
  margin-left: 6px;
  background: repeating-linear-gradient(#888 0 2px, transparent 2px 4px);
}

.ti-list {
  margin-left: 22px;
}

.ti-list2 {
  margin-left: 5px;
}

.ti-active {
  width: 24px;
  height: 24px;
  margin-left: 4px;
  background: #cfd3d5;
  border: 1px solid #b0b4b6;
  box-sizing: border-box;
  display: flex;
  align-items: center;
  justify-content: center;
}

.tools-sep {
  width: 1px;
  height: 24px;
  margin-left: 4px;
  background: #a8acad;
}

.ti-tag {
  margin-left: 7px;
}

.ti-tag + .tools-sep {
  margin-left: 7px;
}

.ti-filter {
  margin-left: 8px;
}

.tools-more {
  margin-left: 17px;
  width: 10px;
  font-size: 14px;
  font-weight: 700;
  color: #333;
  line-height: 18px;
}

.ti-notes {
  margin-left: 9px;
}

.search-row {
  height: 28px;
  display: flex;
  align-items: center;
  padding-left: 12px;
}

.funnel {
  width: 17px;
  height: 17px;
}

.search-box {
  width: 186px;
  height: 28px;
  margin-left: 3px;
  background: #fff;
  border: 1px solid #b5b9b9;
  box-sizing: border-box;
  display: flex;
  align-items: center;
  justify-content: flex-end;
  padding-right: 5px;
}

.search-x {
  color: #9a9a9a;
  font-size: 16px;
  line-height: 16px;
}

.search-caret {
  margin-left: 6px;
  border-width: 4px;
  border-top-width: 4px;
}

.search-plus {
  width: 11px;
  height: 11px;
  margin-left: 11px;
  background:
    linear-gradient(#8b8f90, #8b8f90) center / 100% 3px no-repeat,
    linear-gradient(#8b8f90, #8b8f90) center / 3px 100% no-repeat;
}

.tree {
  position: relative;
  margin-top: 5px;
}

.tree-line {
  position: absolute;
  left: 19px;
  top: 16px;
  height: 226px;
  width: 1px;
  background: #bfc3c3;
}

.tree-row {
  height: 22px;
  display: flex;
  align-items: center;
  position: relative;
  white-space: nowrap;
  letter-spacing: .2px;
  color: #555;
}

.tree-icon {
  width: 14px;
  height: 14px;
  margin-right: 6px;
}

.wide .tree-icon {
  width: 16px;
  height: 16px;
  margin-left: -1px;
  margin-right: 5px;
}

.lvl0 {
  padding-left: 12px;
}

.lvl1 {
  padding-left: 32px;
}

.lvl2 {
  padding-left: 52px;
}

.lvl1::before,
.lvl2::before {
  content: "";
  position: absolute;
  top: 11px;
  height: 1px;
  background: #bfc3c3;
}

.lvl1::before {
  left: 20px;
  width: 10px;
}

.lvl2::before {
  left: 40px;
  width: 10px;
}

.lvl2::after {
  content: "";
  position: absolute;
  left: 39px;
  top: 0;
  height: 22px;
  width: 1px;
  background: #bfc3c3;
}

.lvl2.last::after {
  height: 11px;
}

.twist {
  position: absolute;
  z-index: 1;
  width: 0;
  height: 0;
}

.twist.right {
  left: 17px;
  top: 7px;
  border: 4px solid transparent;
  border-left: 5px solid #555;
  border-right: 0;
}

.lvl2 .twist.right {
  left: 37px;
}

.twist.down {
  left: 15px;
  top: 9px;
  border: 4px solid transparent;
  border-top: 5px solid #666;
  border-bottom: 0;
}

.tree-label.selected {
  background: #aedcfb;
  outline: 1px dotted #222;
  outline-offset: -1px;
  color: #333;
  line-height: 19px;
  padding: 0 1px;
  margin-left: -1px;
}

.muted .tree-label {
  color: #c9c4b2;
  font-weight: 700;
}

.insert-line {
  position: absolute;
  left: 12px;
  width: 248px;
  top: 249px;
  height: 2px;
  background: #6cc64c;
}

.insert-line::before,
.insert-line::after {
  content: "";
  position: absolute;
  top: -2px;
  width: 2px;
  height: 6px;
  background: #6cc64c;
}

.insert-line::before {
  left: 0;
}

.insert-line::after {
  right: 0;
}

.canvas {
  flex: 1;
  background: #fff;
  position: relative;
}

.drawing {
  position: absolute;
  inset: 0;
  width: 1069px;
  height: 564px;
}

.dim-text {
  font-family: "Open Sans", sans-serif;
  font-size: 15px;
}

.view-bar {
  position: absolute;
  left: 326px;
  top: 8px;
  height: 31px;
  padding: 0 1px;
  box-sizing: border-box;
  background: #f7f9fb;
  border: 1px solid #a5a8a8;
  display: flex;
  align-items: center;
}

.view-btn {
  width: 26px;
  height: 25px;
  box-sizing: border-box;
  display: flex;
  align-items: center;
  justify-content: center;
  position: relative;
}

.view-btn svg {
  width: 20px;
  height: 20px;
  position: relative;
}

/* pressed state is a 23px box inside the 26px slot */
.view-btn.on::before {
  content: "";
  position: absolute;
  left: 1px;
  right: 2px;
  top: 1px;
  bottom: 2px;
  background: #cfd3d5;
  border: 1px solid #b0b4b6;
}

.corner {
  position: absolute;
  right: 2px;
  bottom: 3px;
  width: 0;
  height: 0;
  border-left: 3px solid transparent;
  border-bottom: 3px solid #666;
}

.note {
  position: absolute;
  left: 199px;
  top: 260px;
  font-size: 16px;
  letter-spacing: 1px;
  font-weight: 700;
  color: #f0f;
  font-family: "Noto Sans CJK SC", sans-serif;
  white-space: nowrap;
}

.note span {
  display: block;
  height: 16px;
  line-height: 16px;
}

.mark {
  position: absolute;
  right: 0;
  bottom: 0;
  width: 186px;
  height: 88px;
}

.mark-name {
  position: absolute;
  left: 0;
  top: 16px;
  font-size: 40px;
  line-height: 46px;
  font-weight: 300;
  white-space: nowrap;
  font-family: "Noto Sans CJK SC", sans-serif;
}

.mark-hot {
  color: #f2683a;
}

.mark-cold {
  color: #111;
  margin-left: 5px;
}

.mark-flame {
  position: absolute;
  left: 60px;
  top: 3px;
  width: 30px;
  height: 50px;
}

.mark-url {
  position: absolute;
  left: 3px;
  top: 65px;
  font-family: "Liberation Sans", sans-serif;
  font-size: 13.500px;
  font-style: italic;
  font-weight: 700;
  letter-spacing: 1.300px;
  color: #9a9a9a;
  white-space: nowrap;
}
</style>
